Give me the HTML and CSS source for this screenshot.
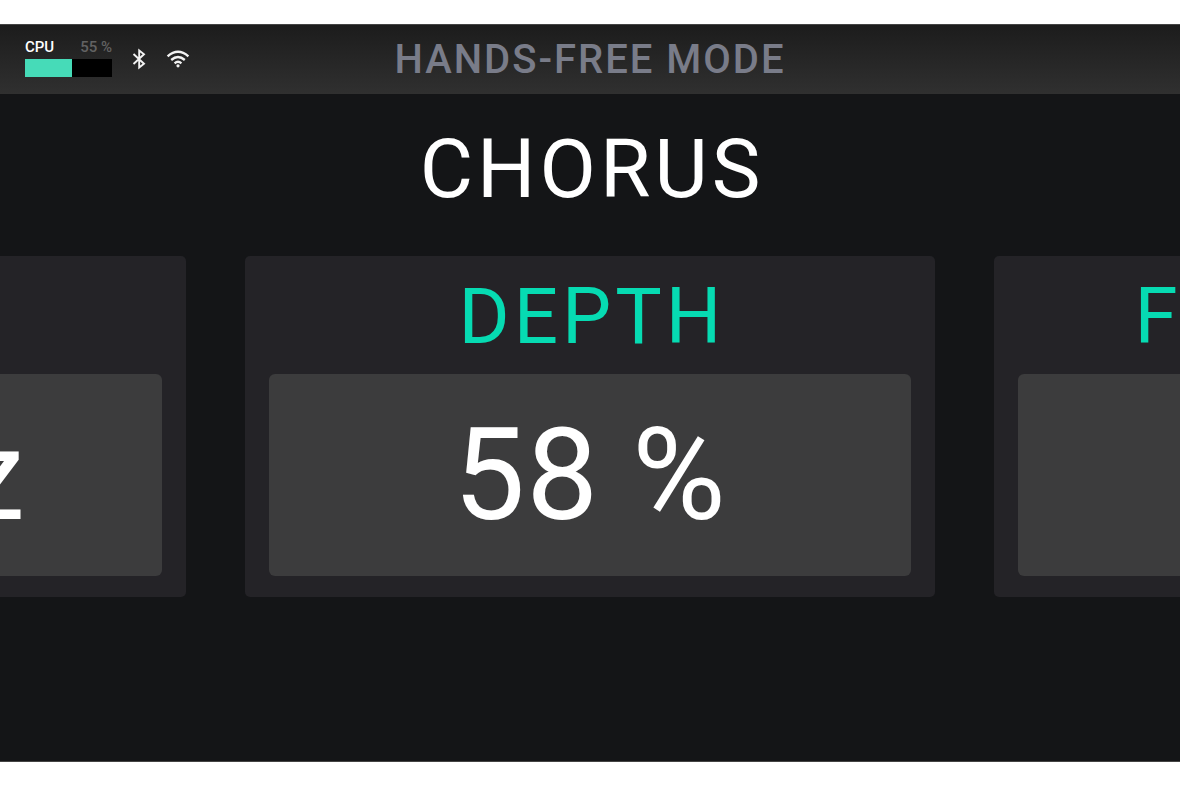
FILE: index.html
```html
<!DOCTYPE html>
<html lang="en">
	<head>
		<meta charset="UTF-8">
		<title>Hands-Free Mode</title>
		<link rel="stylesheet" href="styles.css">
	</head>
	<body>
		<div class="screen">
			<header class="topbar">
				<div class="status">
					<div class="cpu">
						<div class="cpu-text"><span>CPU</span><span class="cpu-value">55 %</span></div>
						<div class="cpu-bar"><div class="cpu-fill" style="width:54%"></div></div>
					</div>
					<svg class="icon-bt" viewBox="0 0 14 22" fill="none" stroke="#f2f2f2" stroke-width="1.9">
						<path d="M1.5 6 L12 15.7 L7.2 19.6 V2.4 L12 6.3 L1.5 16"/>
					</svg>
					<svg class="icon-wifi" viewBox="0 0 24 18" fill="none" stroke="#f2f2f2" stroke-width="2.4">
						<path d="M1.6 6.3 Q12 -2.7 22.4 6.3"/>
						<path d="M5.2 10 Q12 4.2 18.8 10"/>
						<path d="M8.6 13.3 Q12 10.4 15.4 13.3"/>
						<circle cx="12" cy="15.8" r="1.6" fill="#f2f2f2" stroke="none"/>
					</svg>
				</div>
				<h1 class="mode">HANDS-FREE MODE</h1>
			</header>
			<main>
				<h2 class="effect">CHORUS</h2>
				<div class="params">
					<section class="card">
						<h3 class="label">RATE</h3>
						<div class="value">1.0 Hz</div>
					</section>
					<section class="card">
						<h3 class="label">DEPTH</h3>
						<div class="value">58 %</div>
					</section>
					<section class="card">
						<h3 class="label">FEEDBACK</h3>
						<div class="value">0 %</div>
					</section>
				</div>
			</main>
		</div>
	</body>
</html>
```
FILE: styles.css
```css
*{
	box-sizing:border-box;
}
body{
	margin:0;
	padding:24px 0;
	min-height:100vh;
	display:flex;
	background-color:#fff;
	font-family:Roboto,"Liberation Sans",sans-serif;
	color:#fff;
}
h1,h2,h3{
	margin:0;
	font-weight:400;
}
.screen{
	flex:1;
	min-width:0;
	background-color:#141517;
	border-top:1px solid #444;
	border-bottom:1px solid #444;
	overflow:hidden;
}
.topbar{
	display:grid;
	grid-template-columns:1fr auto 1fr;
	align-items:center;
	height:69px;
	padding:0 25px;
	background:linear-gradient(#1c1c1c,#303030);
}
.status{
	display:flex;
	align-items:center;
	gap:20px;
	padding-bottom:2px;
}
.cpu{
	width:87px;
	padding-bottom:3px;
}
.cpu-text{
	display:flex;
	justify-content:space-between;
	font-size:15px;
	font-weight:500;
	line-height:20px;
	margin-bottom:2px;
}
.cpu-value{
	color:#626262;
}
.cpu-bar{
	height:18px;
	background-color:#000;
}
.cpu-fill{
	height:100%;
	background-color:#46dbb8;
}
.icon-bt{
	width:14px;
	height:22px;
}
.icon-wifi{
	width:24px;
	height:18px;
}
.mode{
	color:#797c89;
	font-size:40px;
	font-weight:500;
	line-height:48px;
	letter-spacing:2px;
}
.effect{
	padding:26px 0 38px 4px;
	text-align:center;
	font-size:82px;
	line-height:98px;
	letter-spacing:4px;
}
.params{
	display:flex;
	justify-content:center;
	gap:5%;
}
.card{
	flex:0 0 58.5%;
	padding:0 24px 21px;
	border-radius:5px;
	background-color:#242327;
	text-align:center;
}
.label{
	padding:4px 0 0 4px;
	color:#06dbb2;
	font-size:78px;
	line-height:114px;
	letter-spacing:4px;
	white-space:nowrap;
}
.value{
	padding:26px 0;
	border-radius:6px;
	background-color:#3c3c3d;
	font-size:128px;
	line-height:150px;
	letter-spacing:1px;
	white-space:nowrap;
}
```
